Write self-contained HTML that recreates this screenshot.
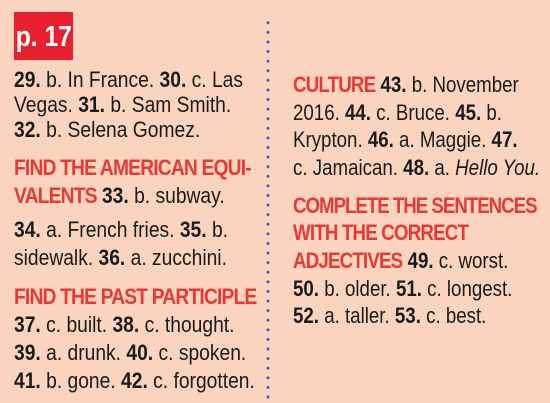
<!DOCTYPE html>
<html><head><meta charset="utf-8"><style>
html,body{margin:0;padding:0}
body{width:550px;height:403px;background:#fbd4bf;position:relative;overflow:hidden;font-family:"Liberation Sans",sans-serif;color:#1a1a1a}
.l{position:absolute;white-space:nowrap;font-size:22px;line-height:24px;transform:scaleX(0.875);transform-origin:0 50%}
.r{transform:scaleX(0.85)}
b{font-weight:bold}
.h{color:#e63a35;font-weight:bold;letter-spacing:-0.95px}
.box{position:absolute;left:14px;top:12px;width:59px;height:48px;background:#e8202f;color:#fff;font-weight:bold;font-size:29px;line-height:50px;white-space:nowrap}
.box span{display:inline-block;transform:scaleX(0.85);transform-origin:0 50%;padding-left:2px}
.dots{position:absolute;left:266px;top:18px;width:4px;height:385px;background:radial-gradient(circle,#2a5bd7 1.3px,transparent 1.6px) 0 0/4px 9.6px repeat-y}
</style></head><body>
<div class="box"><span>p. 17</span></div>
<div class="dots"></div>
<div class="l" style="left:14px;top:68px"><b>29.</b> b. In France. <b>30.</b> c. Las</div>
<div class="l" style="left:14px;top:93px">Vegas. <b>31.</b> b. Sam Smith.</div>
<div class="l" style="left:14px;top:118px"><b>32.</b> b. Selena Gomez.</div>
<div class="l" style="left:14px;top:156px"><span class="h">FIND THE AMERICAN EQUI-</span></div>
<div class="l" style="left:14px;top:184px"><span class="h">VALENTS</span> <b>33.</b> b. subway.</div>
<div class="l" style="left:14px;top:218px"><b>34.</b> a. French fries. <b>35.</b> b.</div>
<div class="l" style="left:14px;top:246px">sidewalk. <b>36.</b> a. zucchini.</div>
<div class="l" style="left:14px;top:285px"><span class="h">FIND THE PAST PARTICIPLE</span></div>
<div class="l" style="left:14px;top:313px"><b>37.</b> c. built. <b>38.</b> c. thought.</div>
<div class="l" style="left:14px;top:341px"><b>39.</b> a. drunk. <b>40.</b> c. spoken.</div>
<div class="l" style="left:14px;top:369px"><b>41.</b> b. gone. <b>42.</b> c. forgotten.</div>

<div class="l r" style="left:293px;top:73px"><span class="h">CULTURE</span> <b>43.</b> b. November</div>
<div class="l r" style="left:293px;top:101px">2016. <b>44.</b> c. Bruce. <b>45.</b> b.</div>
<div class="l r" style="left:293px;top:128px">Krypton. <b>46.</b> a. Maggie. <b>47.</b></div>
<div class="l r" style="left:293px;top:156px">c. Jamaican. <b>48.</b> a. <i>Hello You.</i></div>
<div class="l r" style="left:293px;top:194px"><span class="h" style="letter-spacing:-1.2px">COMPLETE THE SENTENCES</span></div>
<div class="l r" style="left:293px;top:221px"><span class="h">WITH THE CORRECT</span></div>
<div class="l r" style="left:293px;top:249px"><span class="h">ADJECTIVES</span> <b>49.</b> c. worst.</div>
<div class="l r" style="left:293px;top:277px"><b>50.</b> b. older. <b>51.</b> c. longest.</div>
<div class="l r" style="left:293px;top:304px"><b>52.</b> a. taller. <b>53.</b> c. best.</div>
</body></html>
